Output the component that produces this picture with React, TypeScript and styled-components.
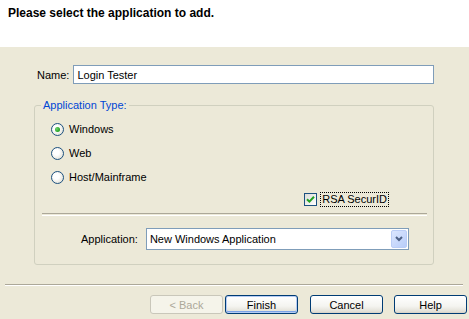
import React, { ReactElement } from "react"
import styled, { createGlobalStyle } from "styled-components"

const GlobalStyle = createGlobalStyle`
	html, body {
		margin: 0;
		padding: 0;
		background: #ece9d8;
	}
	body {
		font-family: "Liberation Sans", Arial, sans-serif;
		font-size: 11px;
		color: #000;
	}
`

const Window = styled.div`
	width: 469px;
	height: 319px;
	display: flex;
	flex-direction: column;
	background: #ece9d8;
	overflow: hidden;
`

const Header = styled.div`
	height: 47px;
	box-sizing: border-box;
	padding: 6px 0 0 8px;
	background: #fff;
	font-weight: bold;
	font-size: 12px;
`

const Main = styled.div`
	flex: 1;
	padding: 18px 35px 0 34px;
`

const NameRow = styled.div`
	display: flex;
	align-items: center;
	gap: 4px;
	padding-left: 3px;
`

const TextInput = styled.div`
	width: 361px;
	height: 19px;
	box-sizing: border-box;
	border: 1px solid #7f9db9;
	background: #fff;
	padding: 0 3px;
	display: flex;
	align-items: center;
`

const Group = styled.fieldset`
	margin: 15px 0 0;
	padding: 0 0 14px;
	border: 1px solid #d0d0bf;
	border-radius: 3px;
	min-width: 0;
`

const Legend = styled.legend`
	margin-left: 6px;
	padding: 0 2px;
	color: #0046d5;
`

const RadioList = styled.div`
	display: flex;
	flex-direction: column;
	padding: 6px 0 0 16px;
`

const RadioRow = styled.label`
	display: flex;
	align-items: center;
	gap: 5px;
	height: 24px;
`

const RadioCircle = styled.span<{ $checked?: boolean }>`
	width: 13px;
	height: 13px;
	box-sizing: border-box;
	border: 1px solid #1c5180;
	border-radius: 50%;
	background: radial-gradient(circle at 40% 40%, #ffffff 30%, #e8e7df 70%, #d4d2c6 100%);
	display: flex;
	align-items: center;
	justify-content: center;

	&::after {
		content: "";
		display: ${(p) => (p.$checked ? "block" : "none")};
		width: 5px;
		height: 5px;
		border-radius: 50%;
		background: radial-gradient(circle at 35% 35%, #6fd36f, #21a121 70%);
	}
`

const CheckRow = styled.label`
	display: flex;
	align-items: center;
	justify-content: flex-end;
	gap: 3px;
	padding: 3px 44px 0 0;
`

const CheckBox = styled.span`
	width: 13px;
	height: 13px;
	box-sizing: border-box;
	border: 1px solid #1c5180;
	background: linear-gradient(135deg, #dcdcd7, #ffffff);
	display: flex;
	align-items: center;
	justify-content: center;
`

const FocusText = styled.span`
	border: 1px dotted #000;
	padding: 0 1px;
	line-height: 13px;
`

const Divider = styled.div`
	margin: 6px 6px 0 7px;
	height: 1px;
	border-top: 1px solid #aca899;
	border-bottom: 1px solid #fff;
`

const AppRow = styled.div`
	display: flex;
	align-items: center;
	gap: 8px;
	padding: 12px 0 0 46px;
`

const Select = styled.div`
	width: 263px;
	height: 22px;
	box-sizing: border-box;
	border: 1px solid #7f9db9;
	background: #fff;
	display: flex;
	align-items: center;
	justify-content: space-between;
	padding: 1px 1px 1px 3px;
`

const SelectButton = styled.span`
	width: 16px;
	height: 18px;
	box-sizing: border-box;
	border: 1px solid #bacdf6;
	border-radius: 2px;
	background: linear-gradient(135deg, #dbe6fe, #b8cdf9);
	display: flex;
	align-items: center;
	justify-content: center;
`

const Footer = styled.div`
	height: 35px;
	display: flex;
	flex-direction: column;
`

const FooterLine = styled.div`
	margin: 0 6px 0 5px;
	border-top: 1px solid #aca899;
	border-bottom: 1px solid #fff;
`

const ButtonRow = styled.div`
	display: flex;
	justify-content: flex-end;
	padding: 9px 2px 0 0;
`

const Button = styled.button<{ $default?: boolean; $gap?: number }>`
	width: 73px;
	height: 19px;
	margin-left: ${(p) => p.$gap ?? 0}px;
	box-sizing: border-box;
	padding: 0;
	font-family: inherit;
	font-size: 11px;
	color: #000;
	border: 1px solid #003c74;
	border-radius: 3px;
	background: linear-gradient(#ffffff, #f4f4f0 60%, #e3e1d8 90%, #d6d0c5);
	box-shadow: ${(p) => (p.$default ? "inset 0 0 0 1px #b5cbf3, inset 0 -1px 0 1px #7ba2e7" : "none")};

	&:disabled {
		color: #aca899;
		border-color: #c9c7ba;
		background: #f5f4ea;
	}
`

const Check = (): ReactElement => (
	<svg width="9" height="9" viewBox="0 0 9 9">
		<path d="M1 4.2 L3.4 6.6 L8 1.8" fill="none" stroke="#21a121" strokeWidth="2" />
	</svg>
)

const Chevron = (): ReactElement => (
	<svg width="8" height="6" viewBox="0 0 8 6">
		<path d="M1 1 L4 4 L7 1" fill="none" stroke="#4d6185" strokeWidth="2" />
	</svg>
)

const options = [
	{ label: "Windows", checked: true },
	{ label: "Web", checked: false },
	{ label: "Host/Mainframe", checked: false },
]

const App = (): ReactElement => (
	<Window>
		<GlobalStyle />
		<Header>Please select the application to add.</Header>

		<Main>
			<NameRow>
				<span>Name:</span>
				<TextInput>Login Tester</TextInput>
			</NameRow>

			<Group>
				<Legend>Application Type:</Legend>
				<RadioList>
					{options.map((o) => (
						<RadioRow key={o.label}>
							<RadioCircle $checked={o.checked} />
							{o.label}
						</RadioRow>
					))}
				</RadioList>

				<CheckRow>
					<CheckBox>
						<Check />
					</CheckBox>
					<FocusText>RSA SecurID</FocusText>
				</CheckRow>

				<Divider />

				<AppRow>
					<span>Application:</span>
					<Select>
						New Windows Application
						<SelectButton>
							<Chevron />
						</SelectButton>
					</Select>
				</AppRow>
			</Group>
		</Main>

		<Footer>
			<FooterLine />
			<ButtonRow>
				<Button disabled>&lt; Back</Button>
				<Button $default $gap={2}>Finish</Button>
				<Button $gap={12}>Cancel</Button>
				<Button $gap={11}>Help</Button>
			</ButtonRow>
		</Footer>
	</Window>
)

export default App
